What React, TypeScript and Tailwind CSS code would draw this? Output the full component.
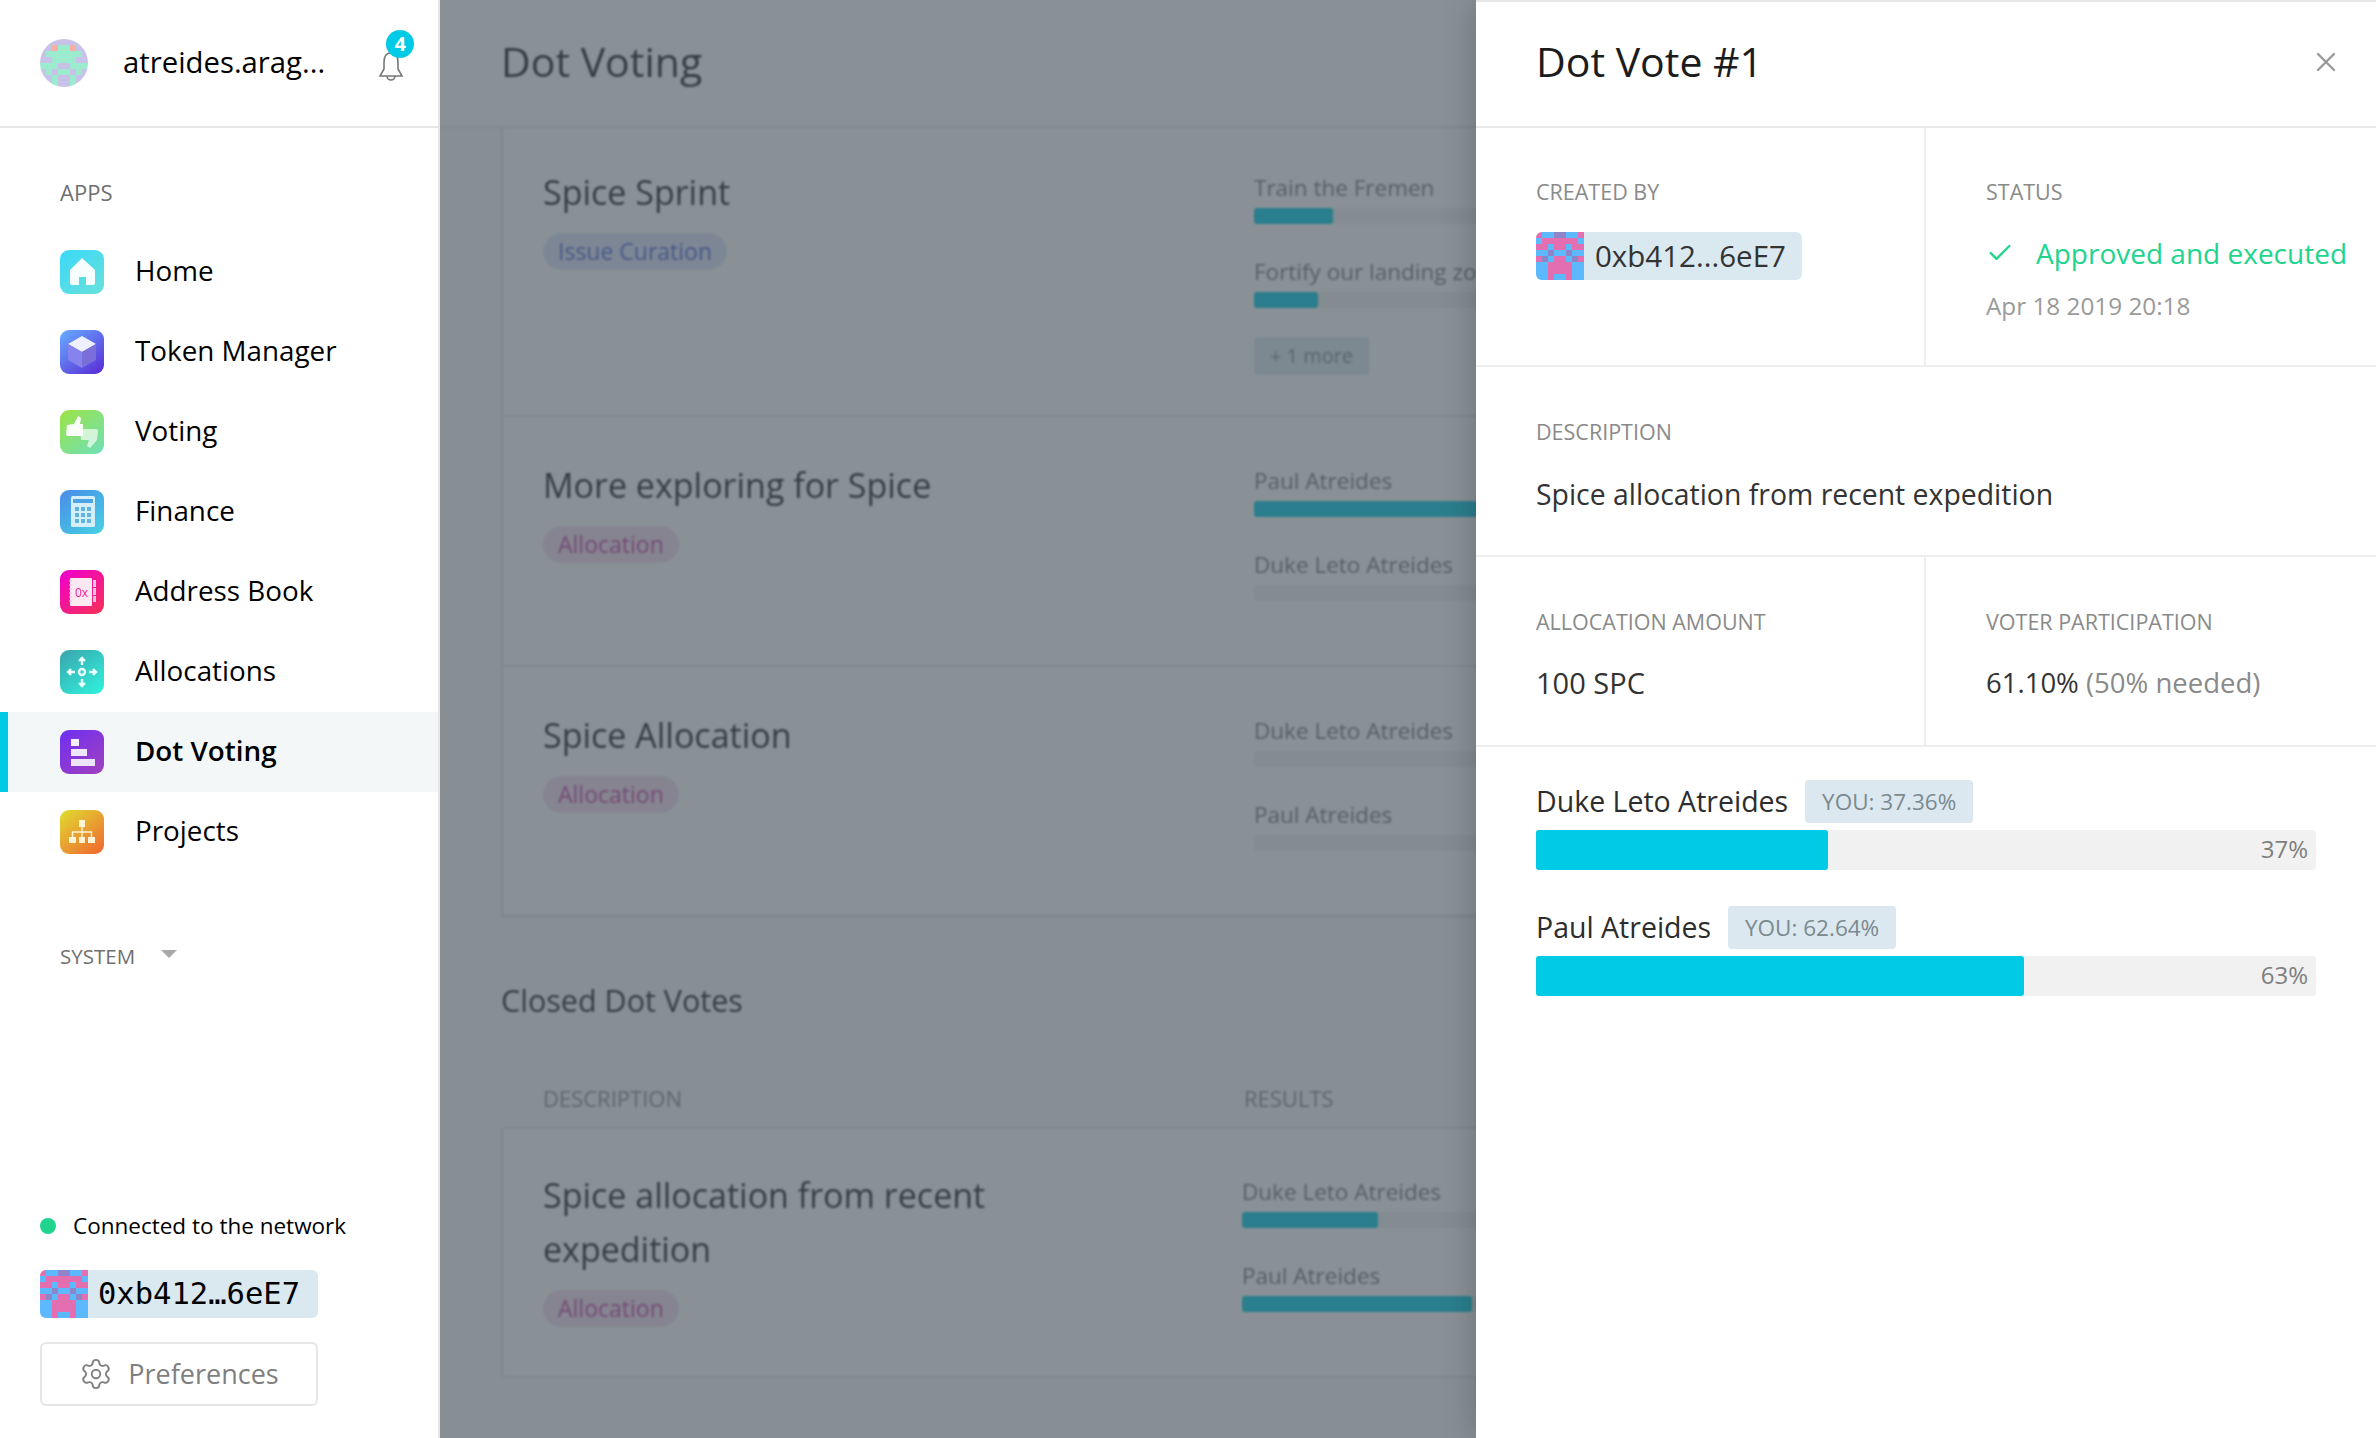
import {Check, Settings, X} from "lucide-react";

const AVATAR = ["LLLLLLLL", "LLSMMSLL", "LMMMMMML", "LLMMMMLL", "MMMLLMMM", "LMLMMLML", "LLMLLMLL", "LLMLLMLL"];
const CHIP = ["PBBVVBBP", "BPPPPPPB", "PPBPPBPP", "BBVBBVBB", "PVBPPBVP", "BBPPPPBB", "BBPPPPBB", "BBPBBPBB"];
const COLORS: Record<string, string> = {
  L: "#c9c2e8",
  M: "#9cebcf",
  S: "#f2b3a6",
  B: "#5cb8ff",
  P: "#e46fb0",
  V: "#8e85c8"
};

const Identicon = ({rows, className}: {rows: string[]; className: string}) => (
  <svg viewBox="0 0 8 8" shapeRendering="crispEdges" className={className}>
    {rows.map((row, y) =>
      row.split("").map((c, x) => <rect key={`${x}-${y}`} x={x} y={y} width="1" height="1" fill={COLORS[c]}/>)
    )}
  </svg>
);

const AppIcon = ({id, from, to, children}: {id: string; from: string; to: string; children: React.ReactNode}) => (
  <svg viewBox="0 0 44 44" className="w-[44px] h-[44px] shrink-0">
    <defs>
      <linearGradient id={id} x1="0.1" y1="0" x2="0.9" y2="1">
        <stop offset="0" stopColor={from}/>
        <stop offset="1" stopColor={to}/>
      </linearGradient>
    </defs>
    <rect width="44" height="44" rx="9" fill={`url(#${id})`}/>
    {children}
  </svg>
);

const NAV = [
  {
    name: "Home",
    icon: (
      <AppIcon id="home" from="#3dd9f7" to="#66e0dc">
        <path d="M22 8 L35 20 V33 a2 2 0 0 1-2 2 H26 V27 H19 V35 H12 a2 2 0 0 1-2-2 V20 Z" fill="#fff" opacity="0.95"/>
      </AppIcon>
    )
  },
  {
    name: "Token Manager",
    icon: (
      <AppIcon id="token" from="#66a8ff" to="#5a2ed6">
        <path d="M22 6 L36 14 L22 22 L8 14 Z" fill="#eef0ff"/>
        <path d="M8 14 L22 22 V38 L8 30 Z" fill="#8583ee"/>
        <path d="M36 14 L22 22 V38 L36 30 Z" fill="#7a6fd8"/>
      </AppIcon>
    )
  },
  {
    name: "Voting",
    icon: (
      <AppIcon id="voting" from="#9be34a" to="#70e0b4">
        <path d="M7 15 L14 14 L18 6 L21 8 L20 14 H23 V26 H8 a2 2 0 0 1-2-2 Z" fill="#fff" opacity="0.95"/>
        <path d="M20 19 H36 a2 2 0 0 1 2 2 L37 30 L30 38 L27 36 L29 30 H21 Z" fill="#fff" opacity="0.65"/>
      </AppIcon>
    )
  },
  {
    name: "Finance",
    icon: (
      <AppIcon id="finance" from="#4a8fe8" to="#45cfe2">
        <rect x="11" y="6" width="24" height="31" rx="1.5" fill="#d4eefa"/>
        <rect x="13" y="9" width="20" height="4" fill="#4ea5e6"/>
        <g fill="#62b4e0">
          <rect x="15" y="17" width="4" height="4"/>
          <rect x="21" y="17" width="4" height="4"/>
          <rect x="27" y="17" width="4" height="4"/>
          <rect x="15" y="23" width="4" height="4"/>
          <rect x="21" y="23" width="4" height="4"/>
          <rect x="27" y="23" width="4" height="4"/>
          <rect x="15" y="29" width="4" height="4"/>
          <rect x="21" y="29" width="4" height="4"/>
          <rect x="27" y="29" width="4" height="4"/>
        </g>
      </AppIcon>
    )
  },
  {
    name: "Address Book",
    icon: (
      <AppIcon id="address" from="#f000cc" to="#f5305a">
        <rect x="10" y="8" width="22" height="28" rx="1" fill="#fde8f2"/>
        <rect x="33" y="10" width="3" height="7" fill="#fbc6dd"/>
        <rect x="33" y="18" width="3" height="7" fill="#fbc6dd"/>
        <rect x="33" y="26" width="3" height="6" fill="#fbc6dd"/>
        <path d="M9 11 H12 M9 15 H12 M9 19 H12 M9 23 H12 M9 27 H12 M9 31 H12" stroke="#f6b8d8" strokeWidth="1"/>
        <text x="15" y="27" fontSize="12" fontFamily="Open Sans, sans-serif" fill="#ec1c94">0x</text>
      </AppIcon>
    )
  },
  {
    name: "Allocations",
    icon: (
      <AppIcon id="alloc" from="#3aa8ae" to="#30f0dc">
        <g fill="none" stroke="#eafffb" strokeWidth="2.4">
          <circle cx="22" cy="22" r="3"/>
          <path d="M22 15 V9 M19 11 L22 8 L25 11"/>
          <path d="M22 29 V35 M19 33 L22 36 L25 33"/>
          <path d="M15 22 H9 M11 19 L8 22 L11 25"/>
          <path d="M29 22 H35 M33 19 L36 22 L33 25"/>
        </g>
      </AppIcon>
    )
  },
  {
    name: "Dot Voting",
    active: true,
    icon: (
      <AppIcon id="dot" from="#7030f0" to="#a040c0">
        <rect x="11" y="9" width="8" height="7" fill="#f4eeff"/>
        <rect x="11" y="19" width="16" height="7" fill="#efe6fb"/>
        <rect x="11" y="29" width="24" height="7" fill="#eee4f8"/>
      </AppIcon>
    )
  },
  {
    name: "Projects",
    icon: (
      <AppIcon id="projects" from="#e0d830" to="#f06a30">
        <g fill="#fff3d6">
          <rect x="19" y="10" width="6" height="7"/>
          <rect x="9" y="27" width="7" height="6"/>
          <rect x="19" y="27" width="6" height="6"/>
          <rect x="28" y="27" width="7" height="6"/>
        </g>
        <path d="M22 17 V27 M12.5 27 V22 H31.5 V27" fill="none" stroke="#fff3d6" strokeWidth="1.4"/>
      </AppIcon>
    )
  }
];

const Progress = ({label, width}: {label: string; width: number}) => (
  <div>
    <div className="text-[22.5px] leading-[28px] text-[#6d777b] whitespace-nowrap">{label}</div>
    <div className="mt-[6px] h-[16px] rounded-[3px] bg-[#f1f1f1]">
      <div className="h-full rounded-[3px] bg-[#00cbe6]" style={{width}}/>
    </div>
  </div>
);

const Tag = ({text, blue, className}: {text: string; blue?: boolean; className: string}) => (
  <span
    className={`inline-block w-fit h-[37px] leading-[37px] px-[15px] rounded-full text-[23px] ${className} ${
      blue ? "bg-[#dfe2fa] text-[#4a66d8]" : "bg-[#f5dcef] text-[#c93fa8]"
    }`}
  >
    {text}
  </span>
);

const VoteRow = ({title, tag, blue, options, more, className}: {
  title: string;
  tag: string;
  blue?: boolean;
  options: [string, number][];
  more?: boolean;
  className: string;
}) => (
  <div className={`grid grid-cols-[711px_1fr] pl-[40px] pr-[60px] border-b-2 border-[#e9e9e9] ${className}`}>
    <div className="flex flex-col items-start">
      <div className="text-[34px] leading-[46px] text-[#1c1c1c]">{title}</div>
      <Tag className="mt-[18px]" text={tag} blue={blue}/>
    </div>
    <div className="pt-[5px]">
      <div className="flex flex-col gap-[34px]">
        {options.map(([label, width]) => <Progress key={label} label={label} width={width}/>)}
      </div>
      {more && (
        <div className="mt-[29px] w-[115px] h-[38px] leading-[38px] text-center rounded-[4px] bg-[#dbe8ef] text-[20px] text-[#7b8a90]">
          + 1 more
        </div>
      )}
    </div>
  </div>
);

const PanelLabel = ({children}: {children: React.ReactNode}) => (
  <div className="h-[24px] leading-[24px] text-[21.5px] uppercase text-[#8a8a8a] whitespace-nowrap">{children}</div>
);

const Result = ({name, you, pct, width, className}: {
  name: string;
  you: string;
  pct: string;
  width: number;
  className?: string;
}) => (
  <div className={className}>
    <div className="flex items-center h-[43px]">
      <span className="text-[28.5px] text-[#2d2d2d]">{name}</span>
      <span className="ml-[17px] h-[43px] w-[168px] leading-[43px] text-center rounded-[4px] bg-[#dbe8ef] text-[22.5px] text-[#7b8a90]">
        YOU: {you}
      </span>
    </div>
    <div className="relative mt-[7px] h-[40px] rounded-[3px] bg-[#f1f1f1]">
      <div className="h-full rounded-[3px] bg-[#00cbe6]" style={{width}}/>
      <span className="absolute right-[8px] top-0 leading-[38px] text-[24px] text-[#7f7f7f]">{pct}</span>
    </div>
  </div>
);

export default function App() {
  return (
    <div className="flex w-[2376px] h-[1438px] overflow-hidden bg-white font-['Open_Sans',sans-serif] text-black">
      <aside className="relative z-10 flex flex-col w-[440px] shrink-0 bg-white border-r-2 border-[#e6e6e6]">
        <div className="flex items-center h-[128px] shrink-0 pl-[40px] border-b-2 border-[#e6e6e6]">
          <Identicon rows={AVATAR} className="w-[48px] h-[48px] rounded-full"/>
          <span className="ml-[35px] text-[29.3px]">atreides.arag...</span>
          <div className="relative ml-[53px] mt-[6px]">
            <svg viewBox="0 0 26 32" fill="none" stroke="#777" strokeWidth="1.6" className="w-[26px] h-[32px]">
              <path d="M13 3 C8 3 6 7 6 12 V19 L2 26 H24 L20 19 V12 C20 7 18 3 13 3 Z"/>
              <path d="M9 26 a4 4 0 0 0 8 0"/>
            </svg>
            <span className="absolute -top-[20px] left-[8px] w-[28px] h-[28px] leading-[28px] text-center rounded-full bg-[#00cbe6] text-white text-[20px] font-bold">
              4
            </span>
          </div>
        </div>
        <div className="mt-[52px] pl-[60px] h-[24px] leading-[24px] text-[22px] text-[#707070]">APPS</div>
        <nav className="mt-[28px]">
          {NAV.map((item) => (
            <div
              key={item.name}
              className={`flex items-center h-[80px] pl-[60px] ${item.active ? "bg-[#f4f7f8] shadow-[inset_8px_0_0_#00cbe6] font-semibold" : ""}`}
            >
              {item.icon}
              <span className="ml-[31px] mb-[2px] text-[27.8px]">{item.name}</span>
            </div>
          ))}
        </nav>
        <div className="flex items-center mt-[72px] pl-[60px] h-[24px] text-[20.5px] text-[#707070]">
          SYSTEM
          <span className="ml-[26px] mb-[4px] w-0 h-0 border-x-[8px] border-x-transparent border-t-[8px] border-t-[#a8a8a8]"/>
        </div>
        <div className="mt-auto pl-[40px] pb-[32px]">
          <div className="flex items-center h-[24px]">
            <span className="w-[16px] h-[16px] rounded-full bg-[#21d48e]"/>
            <span className="ml-[17px] text-[22.5px]">Connected to the network</span>
          </div>
          <div className="flex items-center mt-[32px] w-[278px] h-[48px] rounded-[6px] overflow-hidden bg-[#dae8ef]">
            <Identicon rows={CHIP} className="w-[48px] h-[48px]"/>
            <span className="ml-[10px] font-['DejaVu_Sans_Mono',monospace] text-[30.5px]">0xb412…6eE7</span>
          </div>
          <div className="flex items-center justify-center mt-[24px] w-[278px] h-[64px] rounded-[6px] border-2 border-[#e6e6e6] text-[#7f7f7f]">
            <Settings className="w-[34px] h-[34px]" strokeWidth={1.3}/>
            <span className="ml-[15px] text-[27px]">Preferences</span>
          </div>
        </div>
      </aside>

      <main className="relative flex-1 min-w-0 overflow-hidden bg-[#f9fafc]">
        <div className="blur-[1.3px] w-[1400px]">
          <div className="h-[128px] flex items-center pl-[61px] pb-[2px] bg-white border-b-2 border-[#e6e6e6] text-[41px] text-[#1c1c1c]">
            Dot Voting
          </div>
          <div className="pl-[61px]">
            <div className="bg-white border-x-2 border-b-2 border-[#e6e6e6] rounded-b-[4px]">
              <VoteRow
                className="h-[289px] pt-[41px]"
                title="Spice Sprint"
                tag="Issue Curation"
                blue
                more
                options={[["Train the Fremen", 79], ["Fortify our landing zone", 64]]}
              />
              <VoteRow
                className="h-[250px] pt-[45px]"
                title="More exploring for Spice"
                tag="Allocation"
                options={[["Paul Atreides", 400], ["Duke Leto Atreides", 0]]}
              />
              <VoteRow
                className="h-[249px] pt-[45px] border-b-0"
                title="Spice Allocation"
                tag="Allocation"
                options={[["Duke Leto Atreides", 0], ["Paul Atreides", 0]]}
              />
            </div>
            <div className="mt-[62px] text-[30.5px] leading-[40px] text-[#1c1c1c]">Closed Dot Votes</div>
            <div className="mt-[66px] grid grid-cols-[701px_1fr] pl-[42px] h-[24px] leading-[24px] text-[22px] text-[#8a8a8a]">
              <span>DESCRIPTION</span>
              <span>RESULTS</span>
            </div>
            <div className="mt-[17px] h-[251px] bg-white border-2 border-[#e6e6e6] rounded-[4px] grid grid-cols-[699px_1fr] pl-[40px] pt-[39px]">
              <div className="flex flex-col items-start">
                <div className="w-[480px] text-[34px] leading-[54px] text-[#1c1c1c]">Spice allocation from recent expedition</div>
                <Tag className="mt-[14px]" text="Allocation"/>
              </div>
              <div className="flex flex-col gap-[34px] pt-[10px]">
                <Progress label="Duke Leto Atreides" width={136}/>
                <Progress label="Paul Atreides" width={230}/>
              </div>
            </div>
          </div>
        </div>
        <div className="absolute inset-0 bg-[#445159]/63"/>
      </main>

      <section className="relative z-10 w-[900px] shrink-0 bg-white border-t-2 border-[#e6e6e6] shadow-[-4px_0_30px_rgba(0,0,0,0.18)]">
        <div className="flex items-center justify-between h-[126px] pl-[60px] pr-[34px] pb-[4px] border-b-2 border-[#e9e9e9]">
          <span className="text-[41px] text-[#1c1c1c]">Dot Vote #1</span>
          <X className="w-[32px] h-[32px] text-[#9a9a9a]" strokeWidth={1.8}/>
        </div>
        <div className="grid grid-cols-[450px_1fr] h-[239px] border-b-2 border-[#eeeeee]">
          <div className="pl-[60px] pt-[52px] border-r-2 border-[#eeeeee]">
            <PanelLabel>Created by</PanelLabel>
            <div className="flex items-center mt-[28px] w-[266px] h-[48px] rounded-[6px] overflow-hidden bg-[#dae8ef]">
              <Identicon rows={CHIP} className="w-[48px] h-[48px]"/>
              <span className="ml-[11px] text-[29.5px] text-[#333]">0xb412...6eE7</span>
            </div>
          </div>
          <div className="pl-[60px] pt-[52px]">
            <PanelLabel>Status</PanelLabel>
            <div className="flex items-center mt-[27px] h-[44px] text-[#21d48e]">
              <Check className="w-[28px] h-[28px]" strokeWidth={2}/>
              <span className="ml-[22px] text-[28px] whitespace-nowrap">Approved and executed</span>
            </div>
            <div className="mt-[14px] text-[24.3px] leading-[34px] text-[#9a9a9a]">Apr 18 2019 20:18</div>
          </div>
        </div>
        <div className="h-[190px] pl-[60px] pt-[53px] border-b-2 border-[#eeeeee]">
          <PanelLabel>Description</PanelLabel>
          <div className="mt-[30px] text-[28.4px] leading-[40px] text-[#333]">Spice allocation from recent expedition</div>
        </div>
        <div className="grid grid-cols-[450px_1fr] h-[190px] border-b-2 border-[#eeeeee]">
          <div className="pl-[60px] pt-[53px] border-r-2 border-[#eeeeee]">
            <PanelLabel>Allocation amount</PanelLabel>
            <div className="mt-[29px] text-[29px] leading-[40px] text-[#333]">100 SPC</div>
          </div>
          <div className="pl-[60px] pt-[53px]">
            <PanelLabel>Voter participation</PanelLabel>
            <div className="mt-[29px] text-[27.5px] leading-[40px] text-[#333]">
              61.10% <span className="text-[#8a8a8a]">(50% needed)</span>
            </div>
          </div>
        </div>
        <div className="pl-[60px] pr-[60px] pt-[33px]">
          <Result name="Duke Leto Atreides" you="37.36%" pct="37%" width={292}/>
          <Result className="mt-[36px]" name="Paul Atreides" you="62.64%" pct="63%" width={488}/>
        </div>
      </section>
    </div>
  );
}
